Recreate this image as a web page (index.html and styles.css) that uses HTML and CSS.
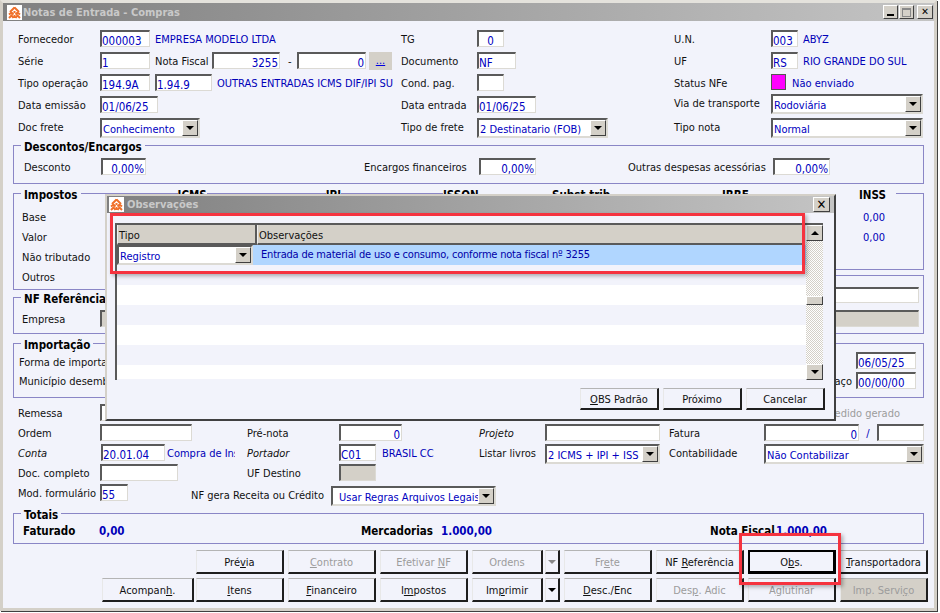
FILE: index.html
```html
<!DOCTYPE html>
<html lang="pt-BR">
<head>
<meta charset="utf-8">
<title>Notas de Entrada - Compras</title>
<link rel="stylesheet" href="styles.css">
</head>
<body>
<svg class="defs" aria-hidden="true"><defs><symbol id="logo" viewBox="0 0 15 15"><rect width="15" height="15" fill="#fff"/><path d="M7.5 2.5 3 7M7.5 2.5 12 7M2 9.500l2.500-2 2 2M8.500 9.500l2-2 2.500 2M2 13l2.500-2.500 2 2.500M8.500 13l2-2.500 2.500 2.500M7.500 6v2M7.500 10v3" fill="none" stroke="#f0702a" stroke-width="2"/></symbol></defs></svg>
<div class="window">
  <div class="title">
    <svg class="logo"><use href="#logo"/></svg>
    <span class="title-text">Notas de Entrada - Compras</span>
    <span class="wbtns">
      <span class="wb wb-min"><i></i></span><span class="wb wb-max"><i></i></span><span class="wb wb-close">✕</span>
    </span>
  </div>
  <div class="form">
    <div class="top">
      <div class="col">
        <div class="row"><span class="lb w82">Fornecedor</span><span class="in w50">000003</span><span class="tx ml5">EMPRESA MODELO LTDA</span></div>
        <div class="row"><span class="lb w82">Série</span><span class="in w50">1</span><span class="lb ml5 w57">Nota Fiscal</span><span class="in w68 r">3255</span><span class="lb dash">-</span><span class="in w69 r">0</span><span class="dots">...</span></div>
        <div class="row"><span class="lb w82">Tipo operação</span><span class="in w50">194.9A</span><span class="in w57 ml5">1.94.9</span><span class="tx ml5 w176 clip">OUTRAS ENTRADAS ICMS DIF/IPI SUSPENSO</span></div>
        <div class="row"><span class="lb w82">Data emissão</span><span class="in w58">01/06/25</span></div>
        <div class="row"><span class="lb w82">Doc frete</span><span class="sel w100"><span class="sv">Conhecimento</span><b class="ar"></b></span></div>
      </div>
      <div class="col">
        <div class="row"><span class="lb w76">TG</span><span class="in w27 c">0</span></div>
        <div class="row"><span class="lb w76">Documento</span><span class="in w39">NF</span></div>
        <div class="row"><span class="lb w76">Cond. pag.</span><span class="in w27"></span></div>
        <div class="row"><span class="lb w76">Data entrada</span><span class="in w59">01/06/25</span></div>
        <div class="row"><span class="lb w76">Tipo de frete</span><span class="sel w131"><span class="sv">2 Destinatario (FOB)</span><b class="ar"></b></span></div>
      </div>
      <div class="col">
        <div class="row"><span class="lb w97">U.N.</span><span class="in w27">003</span><span class="tx ml5">ABYZ</span></div>
        <div class="row"><span class="lb w97">UF</span><span class="in w27">RS</span><span class="tx ml5">RIO GRANDE DO SUL</span></div>
        <div class="row"><span class="lb w97">Status NFe</span><span class="status"></span><span class="tx ml6">Não enviado</span></div>
        <div class="row"><span class="lb w97 up">Via de transporte</span><span class="sel w152 up"><span class="sv">Rodoviária</span><b class="ar"></b></span></div>
        <div class="row"><span class="lb w97">Tipo nota</span><span class="sel w152"><span class="sv">Normal</span><b class="ar"></b></span></div>
      </div>
    </div>

    <section class="group g-desc">
      <div class="legend">Descontos/Encargos</div>
      <div class="row desc-row"><span class="lb w77">Desconto</span><span class="in w45 r">0,00%</span><span class="lb ml218 w115">Encargos financeiros</span><span class="in w57 r">0,00%</span><span class="lb ml92 w145">Outras despesas acessórias</span><span class="in w57 r">0,00%</span></div>
    </section>

    <div class="mid">
      <div class="mid-col">
        <section class="group g-left g-imp">
          <div class="legend-row"><div class="legend">Impostos</div><span class="hd hd-icms">ICMS</span><span class="hd hd-ipi">IPI</span></div>
          <div class="rows20">
            <div class="lb">Base</div><div class="lb">Valor</div><div class="lb">Não tributado</div><div class="lb">Outros</div>
          </div>
        </section>
        <section class="group g-left g-nf">
          <div class="legend">NF Referência</div>
          <div class="row nf-row"><span class="lb w78">Empresa</span><span class="in w50 grey"></span></div>
        </section>
        <section class="group g-left g-impo">
          <div class="legend">Importação</div>
          <div class="lb impo-l1">Forma de importação</div>
          <div class="lb impo-l2">Município desembarque</div>
        </section>
      </div>
      <div class="mid-col">
        <section class="group g-right g-imp-r">
          <div class="legend-row hd-row"><span class="hd w109">ISSQN</span><span class="hd w170">Subst.trib</span><span class="hd w137">IRRF</span><span class="hd hd-inss">INSS</span></div>
          <div class="rows20 vals"><div class="tx">0,00</div><div class="tx">0,00</div></div>
        </section>
        <section class="group g-right g-nf-r">
          <span class="in w139 h16"></span>
          <span class="in w139 grey"></span>
        </section>
        <section class="group g-right g-impo-r">
          <div class="row end"><span class="in w60">06/05/25</span></div>
          <div class="row end"><span class="lb mr4">Data de desembaraço</span><span class="in w60">00/00/00</span></div>
        </section>
      </div>
    </div>

    <div class="bgrid r-rem">
      <div class="cell"><span class="lb w82">Remessa</span><span class="in w28"></span></div>
      <div class="cell"><span class="in w37 ml176 grey"></span></div>
      <div class="cell"></div>
      <div class="cell"><span class="in w33 ml95"></span><span class="lb off ml32">Pedido gerado</span></div>
    </div>
    <div class="bgrid">
      <div class="cell"><span class="lb w82">Ordem</span><span class="in w92"></span></div>
      <div class="cell"><span class="lb w92">Pré-nota</span><span class="in w63 r">0</span></div>
      <div class="cell"><span class="lb w66 it">Projeto</span><span class="in w115"></span></div>
      <div class="cell"><span class="lb w95">Fatura</span><span class="in w95 r">0</span><span class="tx slash">/</span><span class="in w47"></span></div>
    </div>
    <div class="bgrid">
      <div class="cell"><span class="lb w83 it">Conta</span><span class="in w64">20.01.04</span><span class="tx ml2 w68 clip">Compra de Insumos</span></div>
      <div class="cell"><span class="lb w92 it">Portador</span><span class="in w37">C01</span><span class="tx ml6">BRASIL CC</span></div>
      <div class="cell"><span class="lb w66">Listar livros</span><span class="sel w115"><span class="sv">2 ICMS + IPI + ISS</span><b class="ar"></b></span></div>
      <div class="cell"><span class="lb w95">Contabilidade</span><span class="sel w160"><span class="sv">Não Contabilizar</span><b class="ar"></b></span></div>
    </div>
    <div class="bgrid">
      <div class="cell"><span class="lb w82">Doc. completo</span><span class="in w78"></span></div>
      <div class="cell"><span class="lb w92">UF Destino</span><span class="in w37 grey"></span></div>
      <div class="cell"></div>
      <div class="cell"></div>
    </div>
    <div class="row r-mod">
      <span class="lb w82">Mod. formulário</span><span class="in w28">55</span>
      <span class="lb ml63 w140 dn">NF gera Receita ou Crédito</span>
      <span class="sel w165 dn sel-wide"><span class="sv">Usar Regras Arquivos Legais</span><b class="ar"></b></span>
    </div>

    <section class="group g-tot">
      <div class="legend">Totais</div>
      <div class="row tot-row"><b class="tb w76">Faturado</b><b class="tv w262">0,00</b><b class="tb w80">Mercadorias</b><b class="tv w269">1.000,00</b><b class="tb w66">Nota Fiscal</b><b class="tv">1.000,00</b></div>
    </section>

    <div class="btns">
      <span class="btn"><span>Pré<u>v</u>ia</span></span>
      <span class="btn off"><span><u>C</u>ontrato</span></span>
      <span class="btn off"><span>Efetivar <u>N</u>F</span></span>
      <span class="split"><span class="btn off w71"><span>Ordens</span></span><span class="drop off"><i></i></span></span>
      <span class="btn off"><span>Fr<u>e</u>te</span></span>
      <span class="btn"><span>NF <u>R</u>eferência</span></span>
      <span class="btn def"><span>O<u>b</u>s.</span></span>
      <span class="btn"><span><u>T</u>ransportadora</span></span>
    </div>
    <div class="btns b2">
      <span class="btn w92 mr-2"><span>Acompan<u>h</u>.</span></span>
      <span class="btn"><span><u>I</u>tens</span></span>
      <span class="btn"><span><u>F</u>inanceiro</span></span>
      <span class="btn"><span>I<u>m</u>postos</span></span>
      <span class="split"><span class="btn w71"><span>Im<u>p</u>rimir</span></span><span class="drop"><i></i></span></span>
      <span class="btn"><span><u>D</u>esc./Enc</span></span>
      <span class="btn off"><span>Des<u>p</u>. Adic</span></span>
      <span class="btn off"><span>A<u>g</u>lutinar</span></span>
      <span class="btn off grey-btn"><span>Imp. Servi<u>ç</u>o</span></span>
    </div>
  </div>

  <div class="modal">
    <div class="title m-title">
      <svg class="logo"><use href="#logo"/></svg>
      <span class="title-text">Observações</span>
      <span class="wbtns"><span class="wb wb-close m-close">✕</span></span>
    </div>
    <div class="m-body">
      <div class="grid">
        <div class="g-head"><span class="gh gh-1">Tipo</span><span class="gh gh-2">Observações</span></div>
        <div class="g-sel-row"><span class="sel w136 flush"><span class="sv">Registro</span><b class="ar"></b></span><span class="g-text">Entrada de material de uso e consumo, conforme nota fiscal nº 3255</span></div>
        <div class="g-r"></div><div class="g-r"></div><div class="g-r"></div><div class="g-r"></div><div class="g-r"></div><div class="g-r g-last"></div>
      </div>
      <div class="sb">
        <span class="sb-btn"><i class="tri-up"></i></span>
        <span class="sb-track sb-a"></span>
        <span class="sb-thumb"></span>
        <span class="sb-track sb-b"></span>
        <span class="sb-btn"><i class="tri-down"></i></span>
      </div>
    </div>
    <div class="m-foot">
      <span class="btn m-btn"><span><u>O</u>BS Padrão</span></span>
      <span class="btn m-btn"><span>Próximo</span></span>
      <span class="btn m-btn"><span>Cancelar</span></span>
    </div>
    <div class="red red-grid"></div>
  </div>
  <div class="red red-obs"></div>
</div>
</body>
</html>
```
FILE: styles.css
```css
* { box-sizing: border-box; }
html, body { margin: 0; padding: 0; background: #fff; }
body { width: 940px; height: 613px; overflow: hidden; font-family: "DejaVu Sans", sans-serif; font-stretch: condensed; font-size: 11px; color: #111; }
.defs { position: absolute; width: 0; height: 0; }
i { font-style: normal; }

.window { position: relative; width: 937px; height: 611px; background: #f2f3fb; border: 3px solid #d4d0c8; border-top-color: #e4e2dc; box-shadow: 1px 1px 0 #404040; overflow: hidden; }
.title { height: 18px; display: flex; align-items: center; background: linear-gradient(90deg, #808080, #c4c4c4); padding-left: 4px; }
.logo { width: 15px; height: 15px; flex: none; }
.title-text { margin-left: 1px; font-weight: 700; font-size: 11px; color: #c9c9c9; }
.wbtns { margin-left: auto; display: flex; padding-right: 1px; }
.wb { width: 15px; height: 14px; background: #d4d0c8; border: 1px solid; border-color: #fff #404040 #404040 #fff; display: flex; align-items: center; justify-content: center; font-size: 10px; font-weight: 700; color: #000; line-height: 1; }
.wb-min { align-items: flex-end; padding-bottom: 2px; }
.wb-min i { width: 7px; height: 2px; background: #000; }
.wb-max { margin-left: 1px; }
.wb-max i { width: 9px; height: 9px; border: 1px solid #888; border-top-width: 2px; }
.wb-close { margin-left: 3px; width: 16px; }

.form { padding: 9px 10px 0 10px; width: 921px; height: 590px; }

.top { display: grid; grid-template-columns: 383px 273px 1fr; padding-left: 5px; }
.col { display: flex; flex-direction: column; }
.row { display: flex; align-items: flex-start; height: 22px; }
.col .row:last-child { height: 20px; }

.lb { line-height: 19px; white-space: nowrap; flex: none; }
.tx { line-height: 19px; white-space: nowrap; color: #0000b8; flex: none; }
.clip { overflow: hidden; }
.it { font-style: italic; }
.in { display: block; height: 17px; line-height: 16px; padding: 1px 1px 0 0; background: #fff; color: #0000c0; border: 1px solid #dcdad4; border-top: 2px solid #5a5a5a; border-left: 2px solid #5a5a5a; flex: none; font-size: 11.5px; overflow: hidden; white-space: nowrap; }
.in.r { text-align: right; }
.in.c { text-align: center; }
.in.grey { background: #d4d0c8; }
.h16 { height: 16px; }
.sel { display: flex; align-items: center; justify-content: space-between; height: 20px; background: #fff; color: #0000c0; border: 2px solid #5a5a5a; border-right-color: #dcdad4; border-bottom-color: #dcdad4; flex: none; padding-left: 1px; font-size: 11px; overflow: hidden; white-space: nowrap; }
.sel-wide { padding-left: 6px; }
.sv { overflow: hidden; flex: 1; padding-top: 2px; }
.ar { width: 16px; height: 16px; flex: none; background: #d4d0c8; border: 1px solid; border-color: #fff #404040 #404040 #fff; display: flex; align-items: center; justify-content: center; }
.ar::after, .tri-down { content: ""; display: block; width: 0; height: 0; border: 4px solid transparent; border-top: 4px solid #000; border-bottom: 0; }
.tri-up { display: block; width: 0; height: 0; border: 4px solid transparent; border-bottom: 4px solid #000; border-top: 0; }
.up { margin-top: -2px; }
.status { width: 15px; height: 16px; background: #ff00ff; border: 1px solid #555; flex: none; }
.dash { width: 17px; padding-left: 8px; }
.dots { margin-left: 3px; width: 23px; height: 18px; background: #d4d0c8; color: #0000e0; text-decoration: underline; text-align: center; line-height: 17px; flex: none; }

.group { border: 1px solid #8a86c6; }
.legend { width: fit-content; margin: -6px 0 0 7px; padding: 0 3px; height: 14px; line-height: 14px; background: #f2f3fb; color: #000; font-weight: 700; font-size: 11.5px; white-space: nowrap; flex: none; }
.legend-row { display: flex; height: 14px; margin-top: -6px; }
.legend-row .legend { margin-top: 0; }
.hd { height: 14px; line-height: 14px; font-weight: 700; font-size: 11.5px; color: #000; background: #f2f3fb; flex: none; }
.hd-icms { margin-left: 97px; }
.hd-ipi { margin-left: 119px; }
.hd-row { padding-left: 30px; }
.hd-inss { padding: 0 10px; margin-left: -10px; }

.g-desc { margin-top: 7px; height: 39px; width: 911px; padding-left: 10px; }
.g-desc .legend { margin-left: -3px; }
.desc-row { margin-top: 4px; }

.mid { display: grid; grid-template-columns: 400px 511px; margin-top: 9px; height: 205px; }
.mid-col { display: flex; flex-direction: column; }
.g-left { border-right: 0; padding-left: 8px; }
.g-left .legend { margin-left: -1px; }
.g-right { border-left: 0; }
.g-imp { height: 97px; }
.rows20 { margin-top: 6px; }
.rows20 > div { line-height: 20px; }
.g-nf { margin-top: 7px; height: 37px; }
.nf-row { margin-top: 4px; }
.g-impo { margin-top: 9px; height: 55px; padding-left: 5px; }
.g-impo .legend { margin-left: 2px; }
.impo-l1 { line-height: 21px; }
.impo-l2 { line-height: 18px; }
.g-imp-r { height: 77px; }
.vals { padding-left: 450px; }
.g-nf-r { margin-top: 5px; height: 59px; padding: 11px 4px 0 0; display: flex; flex-direction: column; align-items: flex-end; gap: 7px; }
.g-impo-r { margin-top: 9px; height: 55px; padding: 8px 7px 0 0; }
.g-impo-r .row { height: 20px; }
.end { justify-content: flex-end; }
.mr4 { margin-right: 4px; }

.bgrid { display: grid; grid-template-columns: 229px 232px 190px 255px; height: 20px; padding-left: 5px; }
.cell { display: flex; align-items: flex-start; }
.r-rem { margin-top: 6px; }
.slash { width: 18px; text-align: center; }
.r-mod { height: 20px; padding-left: 5px; }
.dn { margin-top: 2px; }
.g-tot { margin-top: 9px; height: 31px; width: 911px; padding-left: 9px; }
.g-tot .legend { margin-left: -2px; }
.tot-row { height: 16px; }
.tb { line-height: 18px; font-weight: 700; color: #000; flex: none; font-size: 11.5px; }
.tv { line-height: 18px; font-weight: 700; color: #0000b8; flex: none; font-size: 11.5px; }

.btns { display: flex; justify-content: flex-end; gap: 4px; margin-top: 6px; width: 915px; height: 24px; }
.b2 { margin-top: 4px; }
.btn { width: 88px; height: 24px; display: flex; align-items: center; justify-content: center; padding-top: 2px; background: #f2f3fb; border: 1px solid; border-color: #b4b4b4 #1e1e1e #1e1e1e #e8e8e8; border-right-width: 2px; border-bottom-width: 2px; color: #111; font-size: 11px; white-space: nowrap; flex: none; }
.btn.off { color: #9c9c9c; }
.btn.def { border: 2px solid #000; border-right-width: 3px; border-bottom-width: 3px; }
.grey-btn { background: #d4d0c8; }
.split { display: flex; gap: 2px; width: 88px; }
.w71 { width: 71px; }
.drop { width: 15px; height: 24px; background: #f2f3fb; border: 1px solid; border-color: #b4b4b4 #1e1e1e #1e1e1e #e8e8e8; border-right-width: 2px; border-bottom-width: 2px; display: flex; align-items: center; justify-content: center; }
.drop i { display: block; width: 0; height: 0; border: 4px solid transparent; border-top-color: #000; border-bottom: 0; }
.drop.off i { border-top-color: #888; }
.mr-2 { margin-right: -2px; }

/* Floating dialog over the form */
.modal { position: absolute; left: 102px; top: 191px; width: 731px; height: 227px; background: #f2f3fb; border: 2px solid #d4d0c8; border-right-color: #404040; border-bottom-color: #404040; display: flex; flex-direction: column; }
.m-title { height: 17px; flex: none; padding-left: 2px; }
.m-title .title-text { margin-left: 3px; }
.m-close { width: 17px; height: 15px; margin-right: 3px; font-size: 13px; }
.m-body { display: flex; margin: 10px 0 0 8px; height: 157px; }
.grid { width: 691px; border-left: 2px solid #5a5a5a; border-top: 2px solid #5a5a5a; display: flex; flex-direction: column; overflow: hidden; }
.g-head { display: flex; height: 20px; flex: none; }
.gh { background: #d4d0c8; border-right: 2px solid #5a5a5a; border-bottom: 2px solid #5a5a5a; border-left: 1px solid #eee; line-height: 21px; padding-left: 1px; color: #111; font-size: 11px; }
.gh-1 { width: 140px; }
.gh-2 { width: 547px; }
.g-sel-row { display: flex; height: 20px; flex: none; background: #b0d6ff; }
.flush { background: #fff; }
.w136 { width: 136px; }
.g-text { color: #0000a8; padding-left: 8px; line-height: 20px; font-size: 11px; letter-spacing: -.2px; white-space: nowrap; }
.g-r { height: 20px; flex: none; background: #fff; }
.g-sel-row + .g-r, .g-sel-row + .g-r + .g-r + .g-r, .g-sel-row + .g-r + .g-r + .g-r + .g-r + .g-r { background: #f2f3fb; }
.g-last { height: 14px; }
.sb { width: 17px; display: flex; flex-direction: column; flex: none; border-top: 2px solid #5a5a5a; }
.sb-btn { height: 16px; background: #d4d0c8; border: 1px solid; border-color: #fff #404040 #404040 #fff; display: flex; align-items: center; justify-content: center; flex: none; }
.sb-track { background: repeating-conic-gradient(#d4d0c8 0 25%, #fff 0 50%) 0 0 / 2px 2px; }
.sb-a { height: 55px; }
.sb-thumb { height: 9px; background: #d4d0c8; border: 1px solid; border-color: #fff #404040 #404040 #fff; flex: none; }
.sb-b { flex: 1; }
.m-foot { display: flex; justify-content: flex-end; gap: 4px; margin-top: 8px; padding-right: 9px; }
.m-btn { width: 79px; height: 22px; }

.red { position: absolute; border: 3px solid #f5333f; box-shadow: 2px 2px 4px rgba(0,0,0,.3); }
.red-grid { left: 3px; top: 17px; width: 695px; height: 61px; }
.red-obs { left: 736px; top: 530px; width: 102px; height: 52px; }

.w27 { width: 27px; } .w28 { width: 28px; } .w33 { width: 33px; } .w37 { width: 37px; } .w39 { width: 39px; }
.w45 { width: 45px; } .w47 { width: 47px; } .w50 { width: 50px; } .w57 { width: 57px; } .w58 { width: 58px; }
.w59 { width: 59px; } .w60 { width: 60px; } .w63 { width: 63px; } .w64 { width: 64px; } .w66 { width: 66px; }
.w68 { width: 68px; } .w69 { width: 69px; } .w76 { width: 76px; } .w77 { width: 77px; } .w78 { width: 78px; }
.w80 { width: 80px; } .w82 { width: 82px; } .w83 { width: 83px; } .w92 { width: 92px; } .w95 { width: 95px; }
.w97 { width: 97px; } .w100 { width: 100px; } .w109 { width: 109px; } .w115 { width: 115px; } .w131 { width: 131px; }
.w137 { width: 137px; } .w139 { width: 139px; } .w140 { width: 140px; } .w145 { width: 145px; } .w152 { width: 152px; }
.w160 { width: 160px; } .w165 { width: 165px; } .w170 { width: 170px; } .w176 { width: 176px; } .w262 { width: 262px; }
.w269 { width: 269px; }
.ml2 { margin-left: 2px; } .ml3 { margin-left: 3px; } .ml5 { margin-left: 5px; } .ml6 { margin-left: 6px; } .ml32 { margin-left: 32px; }
.ml63 { margin-left: 63px; } .ml92 { margin-left: 92px; } .ml95 { margin-left: 95px; } .ml176 { margin-left: 176px; } .ml218 { margin-left: 218px; }
.lb.off { color: #9c9c9c; }
```
